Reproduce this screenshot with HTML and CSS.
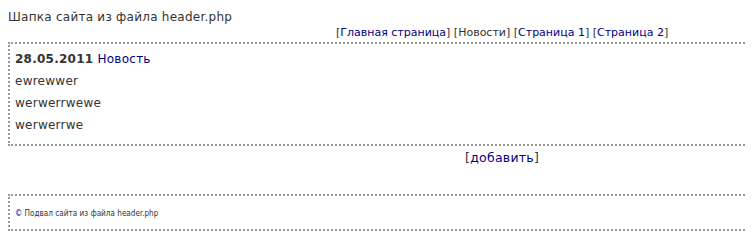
FILE: index.html
```html
<!DOCTYPE html>
<html lang="ru">
<head>
<meta charset="utf-8">
<title>Новости</title>
<link rel="stylesheet" href="styles.css">
</head>
<body>
<div class="site-header">Шапка сайта из файла header.php</div>
<div class="nav">[<a href="#">Главная страница</a>] [Новости] [<a href="#">Страница 1</a>] [<a href="#">Страница 2</a>]</div>
<div class="box news">
  <div class="row"><b class="date">28.05.2011</b> <a href="#">Новость</a></div>
  <div class="row">ewrewwer</div>
  <div class="row">werwerrwewe</div>
  <div class="row">werwerrwe</div>
</div>
<div class="add">[<a href="#">добавить</a>]</div>
<div class="box footer"><span class="copy">©</span> Подвал сайта из файла header.php</div>
</body>
</html>
```
FILE: styles.css
```css
html, body {
  overflow: hidden;
}
body {
  margin: 8px;
  font-family: "DejaVu Sans", Verdana, sans-serif;
  font-size: 12px;
  letter-spacing: 0.25px;
  color: #333;
  background: #fff;
}
a {
  color: #000080;
  text-decoration: none;
}
.site-header {
  line-height: 18px;
}
.nav {
  font-size: 11px;
  letter-spacing: 0;
  line-height: 14px;
  padding-left: 328px;
  margin-bottom: 2px;
}
.box {
  border: 2px dotted #999;
  border-right: none;
  margin-right: -8px;
}
.news {
  padding: 4px 0 8px 5px;
}
.row {
  line-height: 22px;
}
.date {
  font-weight: bold;
}
.add {
  padding-left: 457px;
  font-size: 12.5px;
  line-height: 24px;
  margin-bottom: 24px;
}
.footer {
  font-family: "DejaVu Sans Condensed", "DejaVu Sans", sans-serif;
  font-stretch: condensed;
  font-size: 8.1px;
  letter-spacing: 0;
  line-height: 14px;
  padding: 10px 0 9px 5px;
}
.copy {
  color: #000080;
}
```
